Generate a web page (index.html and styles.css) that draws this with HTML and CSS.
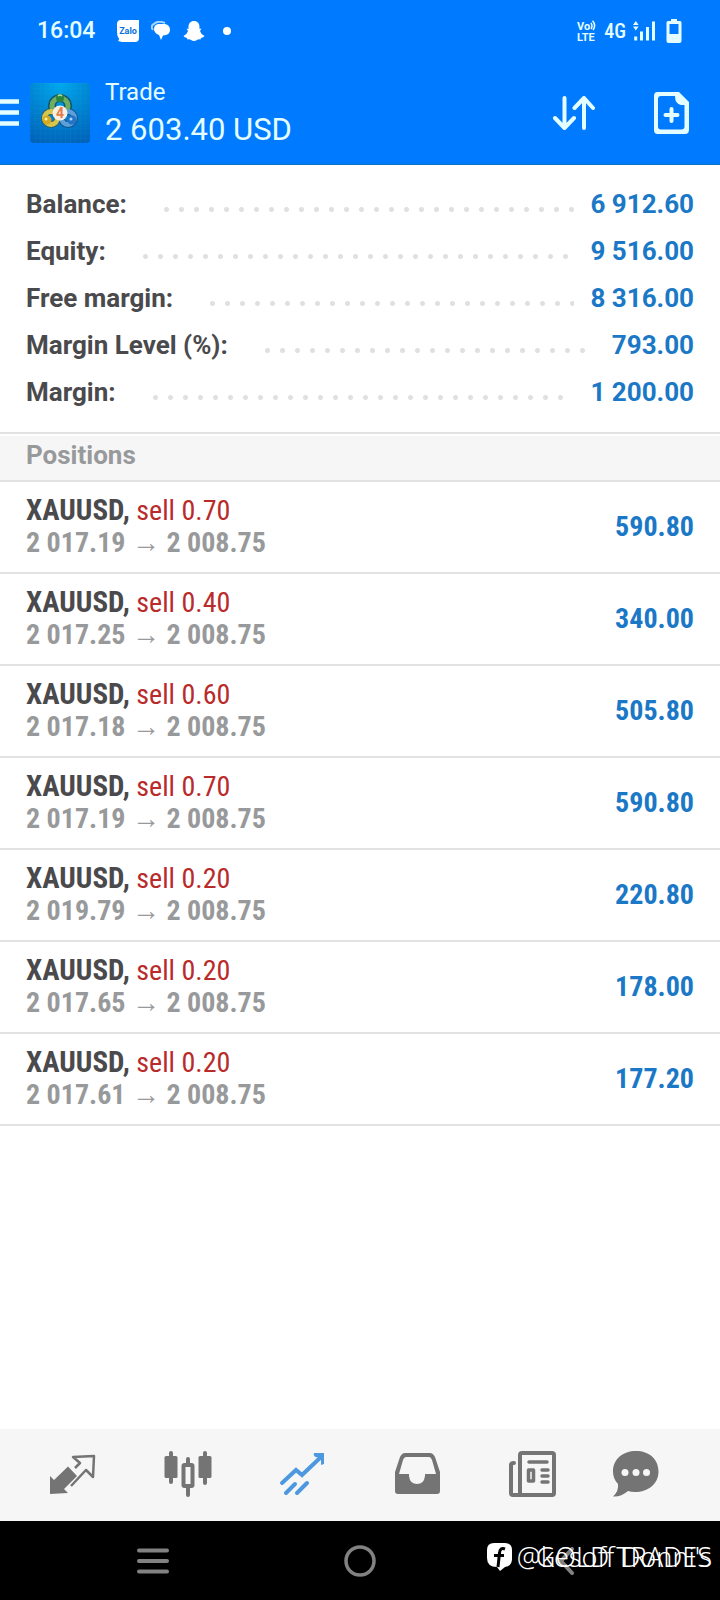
FILE: index.html
```html
<!DOCTYPE html>
<html lang="en">
<head>
<meta charset="utf-8">
<meta name="viewport" content="width=device-width, initial-scale=1">
<title>Trade</title>
<link rel="stylesheet" href="styles.css">
</head>
<body>
<div class="screen">
  <header class="top">
    <div class="status">
      <span class="clock">16:04</span>
      <div class="notices">
        <svg width="22" height="22" viewBox="0 0 22 22"><path d="M4 0H22V18Q22 22 18 22H5L1 21Q3 19 1 17Q0 15 0 11V4Q0 0 4 0Z" fill="#fff"/><text x="11" y="14" class="zalo">Zalo</text></svg>
        <svg width="20" height="20" viewBox="0 0 20 20"><path d="M2 9Q-1 5 3 3Q7-1 14 2" fill="none" stroke="#9fd6ff" stroke-width="2"/><path d="M7 3H14Q19 4 19 9Q19 14 12 14.500L10 19L8 14Q3 12 3 8Q3 4 7 3Z" fill="#fff"/></svg>
        <svg width="22" height="22" viewBox="0 0 22 22"><path d="M11 1C14.500 1 16.500 3.500 16.500 7V9L18.500 8.500L17 11Q18 14.500 21.500 16Q20.500 17.500 18 18L17.500 19.500Q15 19 14 20Q11 22 8 20Q7 19 4.500 19.500L4 18Q1.500 17.500 .5 16Q4 14.500 5 11L3.500 8.500L5.500 9V7C5.500 3.500 7.500 1 11 1Z" fill="#fff"/></svg>
        <i class="more"></i>
      </div>
      <div class="radio">
        <svg width="20" height="22" viewBox="0 0 20 22"><text x="0" y="10" class="volte">Vo</text><text x="0" y="20.500" class="volte">LTE</text><path d="M14 3Q16 6 14 9M15.500 .8Q19.500 5 16 10" fill="none" stroke="#e4feff" stroke-width="1.500"/></svg>
        <span class="net">4G</span>
        <svg width="23" height="20" viewBox="0 0 23 20" fill="#e4feff"><path d="M0 4L2.800 0L5.600 4ZM0 5.500H5.600L2.800 9.500ZM1.200 15.500H4.200V19.500H1.200ZM7 10.500H10V19.500H7ZM13 6H16V19.500H13ZM19 .5H22V19.500H19Z"/></svg>
        <svg class="battery" width="16" height="24" viewBox="0 0 16 24"><path d="M5 0H11V2H14Q15.500 2 15.500 3.500V22Q15.500 24 13.500 24H2.500Q.5 24 .5 22V3.500Q.5 2 2 2H5ZM3.500 5V15H12.500V5Z" fill="#e4feff" fill-rule="evenodd"/></svg>
      </div>
    </div>
    <div class="bar">
      <button class="plain menu" aria-label="Menu"><svg width="19" height="27" viewBox="0 0 19 27"><path d="M0 2.500H19M0 13.500H19M0 24.500H19" stroke="#e4feff" stroke-width="4.500"/></svg></button>
      <svg class="logo" width="60" height="60" viewBox="0 0 60 60">
        <defs>
          <radialGradient id="sky" cx=".5" cy="0" r="1.100"><stop offset="0" stop-color="#00a8ee"/><stop offset=".5" stop-color="#0083d0"/><stop offset="1" stop-color="#0060b8"/></radialGradient>
          <pattern id="grid" width="5" height="5" patternUnits="userSpaceOnUse"><path d="M0 0H5M0 0V5" stroke="#3bc0f0" stroke-opacity=".1"/></pattern>
        </defs>
        <rect width="60" height="60" rx="4" fill="url(#sky)"/><rect width="60" height="60" rx="4" fill="url(#grid)"/>
        <g fill="none" stroke-width="5">
          <circle cx="30" cy="23" r="8" stroke="#16566b" stroke-width="8"/><circle cx="21" cy="35" r="6.500" stroke="#31645f" stroke-width="7"/><circle cx="38" cy="35" r="6.500" stroke="#14528b" stroke-width="7"/>
          <circle cx="30" cy="23" r="8" stroke="#6cae62"/><circle cx="21" cy="35" r="6.500" stroke="#d6c64e"/><circle cx="38" cy="35" r="6.500" stroke="#5aa0da"/>
        </g>
        <circle cx="30" cy="15" r="4" fill="#2b8540"/><circle cx="17" cy="37" r="4.500" fill="#d7a820"/><circle cx="42" cy="37" r="4.500" fill="#2473c4"/>
        <path d="M28 13Q30 11 32 13" stroke="#a8e0a0" stroke-width="1.500" fill="none"/><circle cx="16" cy="36" r="1.500" fill="#fff0a0"/><circle cx="41" cy="36" r="1.500" fill="#a8d8ff"/>
        <circle cx="30" cy="30" r="7.500" fill="#f7efe6"/><text x="30" y="35" class="four">4</text>
      </svg>
      <div class="heading">
        <h1 class="title">Trade</h1>
        <div class="profit">2 603.40 USD</div>
      </div>
      <div class="actions">
        <button class="plain" aria-label="Sort"><svg width="42" height="34" viewBox="0 0 42 34" fill="none" stroke="#e4feff" stroke-width="4" stroke-linecap="round" stroke-linejoin="round"><path d="M11.500 2V32M2 22L11.500 32L21 22M31 32V2M21.500 12L31 2L40 12"/></svg></button>
        <button class="plain" aria-label="New order"><svg width="35" height="42" viewBox="0 0 35 42"><path d="M3.500 0H25L35 10V37.500Q35 42 31 42H3.500Q0 42 0 38V4Q0 0 3.500 0ZM7 4Q4 4 4 7V34.500Q4 37.500 7 37.500H27.500Q30.500 37.500 30.500 34.500V13H27Q21 12 21 4Z" fill="#e4feff" fill-rule="evenodd"/><path d="M17.500 17V29M11.500 23H23.500" stroke="#e4feff" stroke-width="4" stroke-linecap="round"/></svg></button>
      </div>
    </div>
  </header>

  <main class="content">
    <dl class="summary">
      <div class="line"><dt>Balance:</dt><dd><i class="dots"></i>6 912.60</dd></div>
      <div class="line"><dt>Equity:</dt><dd><i class="dots"></i>9 516.00</dd></div>
      <div class="line"><dt>Free margin:</dt><dd><i class="dots"></i>8 316.00</dd></div>
      <div class="line"><dt>Margin Level (%):</dt><dd><i class="dots dots-short"></i>793.00</dd></div>
      <div class="line"><dt>Margin:</dt><dd><i class="dots dots-short"></i>1 200.00</dd></div>
    </dl>
    <h2 class="section">Positions</h2>
    <ul class="positions">
      <li class="position"><div><div><b class="symbol">XAUUSD,</b> <span class="sell">sell 0.70</span></div><div class="prices">2 017.19 <span class="arrow">→</span> 2 008.75</div></div><div class="gain">590.80</div></li>
      <li class="position"><div><div><b class="symbol">XAUUSD,</b> <span class="sell">sell 0.40</span></div><div class="prices">2 017.25 <span class="arrow">→</span> 2 008.75</div></div><div class="gain">340.00</div></li>
      <li class="position"><div><div><b class="symbol">XAUUSD,</b> <span class="sell">sell 0.60</span></div><div class="prices">2 017.18 <span class="arrow">→</span> 2 008.75</div></div><div class="gain">505.80</div></li>
      <li class="position"><div><div><b class="symbol">XAUUSD,</b> <span class="sell">sell 0.70</span></div><div class="prices">2 017.19 <span class="arrow">→</span> 2 008.75</div></div><div class="gain">590.80</div></li>
      <li class="position"><div><div><b class="symbol">XAUUSD,</b> <span class="sell">sell 0.20</span></div><div class="prices">2 019.79 <span class="arrow">→</span> 2 008.75</div></div><div class="gain">220.80</div></li>
      <li class="position"><div><div><b class="symbol">XAUUSD,</b> <span class="sell">sell 0.20</span></div><div class="prices">2 017.65 <span class="arrow">→</span> 2 008.75</div></div><div class="gain">178.00</div></li>
      <li class="position"><div><div><b class="symbol">XAUUSD,</b> <span class="sell">sell 0.20</span></div><div class="prices">2 017.61 <span class="arrow">→</span> 2 008.75</div></div><div class="gain">177.20</div></li>
    </ul>
  </main>

  <nav class="tabs">
    <button class="plain" aria-label="Quotes"><svg width="48" height="48" viewBox="0 0 48 48"><path d="M1 43V25L5 29L19 15.500L28 25L15 38L19 42Z" fill="#747474"/><path d="M26 17L31 12L24 6L45 5L44 26L37 19L22 35" fill="none" stroke="#747474" stroke-width="2.500" stroke-linejoin="round"/></svg></button>
    <button class="plain" aria-label="Charts"><svg width="48" height="48" viewBox="0 0 48 48"><path d="M7 2V31M41 2V32M24 8V14M24 36V44" stroke="#747474" stroke-width="4" stroke-linecap="round"/><rect x=".5" y="5" width="13" height="22" rx="1.500" fill="#747474"/><rect x="34.500" y="5" width="13" height="22" rx="1.500" fill="#747474"/><rect x="19.500" y="14" width="9" height="21" rx="1" fill="none" stroke="#747474" stroke-width="4"/></svg></button>
    <button class="plain" aria-label="Trade" aria-current="page"><svg width="48" height="48" viewBox="0 0 48 48" fill="none" stroke="#4d98df" stroke-width="4" stroke-linecap="round"><path d="M3 32L17 19L23 24L42 6M7 42L16 33M18 42L28 32"/><path d="M35 2H45V13L42 14V8L37 6Q34 5 35 2Z" fill="#4d98df" stroke="none"/></svg></button>
    <button class="plain" aria-label="History"><svg width="48" height="48" viewBox="0 0 48 48"><path d="M11 2H36Q39 2 41 6L46 21V40Q46 43 43 43H4Q1 43 1 40V21L6 6Q8 2 11 2ZM12 6Q10 6 9 9L5 23H15V25Q16 33 23 33Q30 33 31 25V23H42L38 9Q37 6 35 6Z" fill="#747474" fill-rule="evenodd"/></svg></button>
    <button class="plain" aria-label="News"><svg width="48" height="48" viewBox="0 0 48 48" fill="none" stroke="#747474" stroke-width="4" stroke-linecap="round" stroke-linejoin="round"><path d="M13 2H43Q45 2 45 4V42Q45 44 43 44H11V4Q11 2 13 2ZM11 44H4Q2 44 2 42V14Q2 12 5 12"/><path d="M20 11H38M33 19H39M33 25H39M33 31H39" stroke-width="3.500"/><rect x="19.500" y="19" width="5" height="11" stroke-width="3.500"/></svg></button>
    <button class="plain" aria-label="Messages"><svg width="48" height="48" viewBox="0 0 48 48"><path d="M24 0C37 0 46.500 8 46.500 20.500C46.500 33 36 41 23 41Q19 41 16 40Q9 46 1 45.500Q7 40 6 33Q1 28 1 20.500C1 8 11 0 24 0Z" fill="#747474"/><g fill="#f6f6f6"><circle cx="13" cy="21.500" r="3.500"/><circle cx="24" cy="21.500" r="3.500"/><circle cx="34.500" cy="21.500" r="3.500"/></g></svg></button>
  </nav>

  <footer class="system">
    <button class="plain" aria-label="Recent apps"><svg width="32" height="26" viewBox="0 0 32 26"><path d="M2 2.500H30M2 13H30M2 23.500H30" stroke="#828282" stroke-width="4" stroke-linecap="round"/></svg></button>
    <button class="plain" aria-label="Home"><svg width="32" height="32" viewBox="0 0 32 32"><circle cx="16" cy="16" r="14" fill="none" stroke="#828282" stroke-width="3.500"/></svg></button>
    <button class="plain" aria-label="Back"><svg width="16" height="28" viewBox="0 0 16 28"><path d="M13 2L2 14L13 26" fill="none" stroke="#828282" stroke-width="4" stroke-linecap="round"/></svg></button>
    <div class="credit">
      <svg width="26" height="28" viewBox="0 0 26 28"><path d="M7 0H18Q25 0 25 7V16Q25 23 18 24L13 28L10 24Q0 24 0 15V7Q0 0 7 0Z" fill="#fff"/><path d="M18 6Q13 4 12.500 10L11 24M7 12.500H17" fill="none" stroke="#000" stroke-width="3"/></svg>
      <div class="names"><span>@kesoff Donni's</span><span>GOLD TRADES</span></div>
    </div>
  </footer>
</div>
</body>
</html>
```

FILE: styles.css
```css
* { box-sizing: border-box; }
body, h1, h2, dl, dd, ul { margin: 0; padding: 0; }
body { background: #fff; color: #4a4a4d; font-family: Roboto, "Liberation Sans", sans-serif; }
svg { display: block; flex: none; }
.screen { display: flex; flex-direction: column; min-height: 100vh; }
.plain { display: block; padding: 0; border: 0; background: none; }

.top { background: #007bff; border-bottom: 1px solid #1670c4; color: #e4feff; }
.status { display: flex; align-items: center; height: 61px; padding: 0 38px 0 37px; }
.clock { font-size: 23px; font-weight: 500; line-height: 60px; }
.notices { display: flex; align-items: center; gap: 12px; margin-left: 22px; }
.more { width: 8px; height: 8px; margin-left: 6px; border-radius: 50%; background: #fff; }
.radio { display: flex; align-items: center; gap: 7px; margin-left: auto; }
.net { font-family: "Roboto Condensed", Roboto, sans-serif; font-size: 20px; font-weight: 500; line-height: 60px; }
.battery { margin-left: 3px; }
.zalo { font: 700 9px Roboto, sans-serif; fill: #0870d8; text-anchor: middle; }
.volte { font: 700 11px Roboto, sans-serif; fill: #e4feff; }
.bar { display: flex; align-items: center; height: 103px; padding-right: 31px; }
.logo { margin: 0 15px 0 11px; }
.four { font: 700 14px Roboto, sans-serif; fill: #e57b45; text-anchor: middle; }
.heading { padding-bottom: 2px; }
.title { font-size: 24px; font-weight: 400; line-height: 36px; }
.profit { font-size: 31px; line-height: 40px; }
.actions { display: flex; align-items: center; gap: 59px; margin-left: auto; }

.content { flex: 1; }
.summary { padding: 16px 26px; border-bottom: 2px solid #e2e2e2; }
.line { display: flex; font-size: 26px; font-weight: 700; line-height: 47px; }
.line dd { display: flex; flex: 1; color: #1b78c6; }
.dots { flex: 1; height: 5px; margin: 26px 16px 0 32px; background: radial-gradient(circle, #e0e0e0 2px, transparent 3px) 0 0 / 15px 5px repeat-x; }
.dots-short { margin-right: 24px; }
.section { margin-top: 2px; padding: 0 26px 6px; border-bottom: 2px solid #e2e2e2; background: #f6f6f6; color: #98999b; font-size: 26px; font-weight: 700; line-height: 38px; }
.positions { list-style: none; }
.position { display: flex; align-items: center; justify-content: space-between; padding: 13px 26px; border-bottom: 2px solid #e2e2e2; font-family: "Roboto Condensed", Roboto, sans-serif; font-size: 28px; line-height: 32px; }
.symbol { font-size: 29px; line-height: 1; }
.sell { color: #b92a2a; }
.prices { color: #98999b; font-weight: 700; }
.arrow { line-height: 0; }
.gain { color: #1b78c6; font-weight: 700; }

.tabs { display: grid; grid-template-columns: repeat(5, 5fr) 4fr; align-items: center; justify-items: center; height: 92px; padding: 0 38px 0 15px; background: #f6f6f6; }
.system { position: relative; display: grid; grid-template-columns: repeat(3, 1fr); align-items: center; justify-items: center; height: 79px; padding: 0 50px; background: #000; }
.credit { position: absolute; right: 8px; top: 18px; display: flex; align-items: center; gap: 4px; color: #fff; font-family: "Noto Sans", sans-serif; font-size: 27px; font-weight: 300; line-height: 36px; white-space: nowrap; }
.names { display: grid; justify-items: end; }
.names span { grid-area: 1 / 1; }
```
